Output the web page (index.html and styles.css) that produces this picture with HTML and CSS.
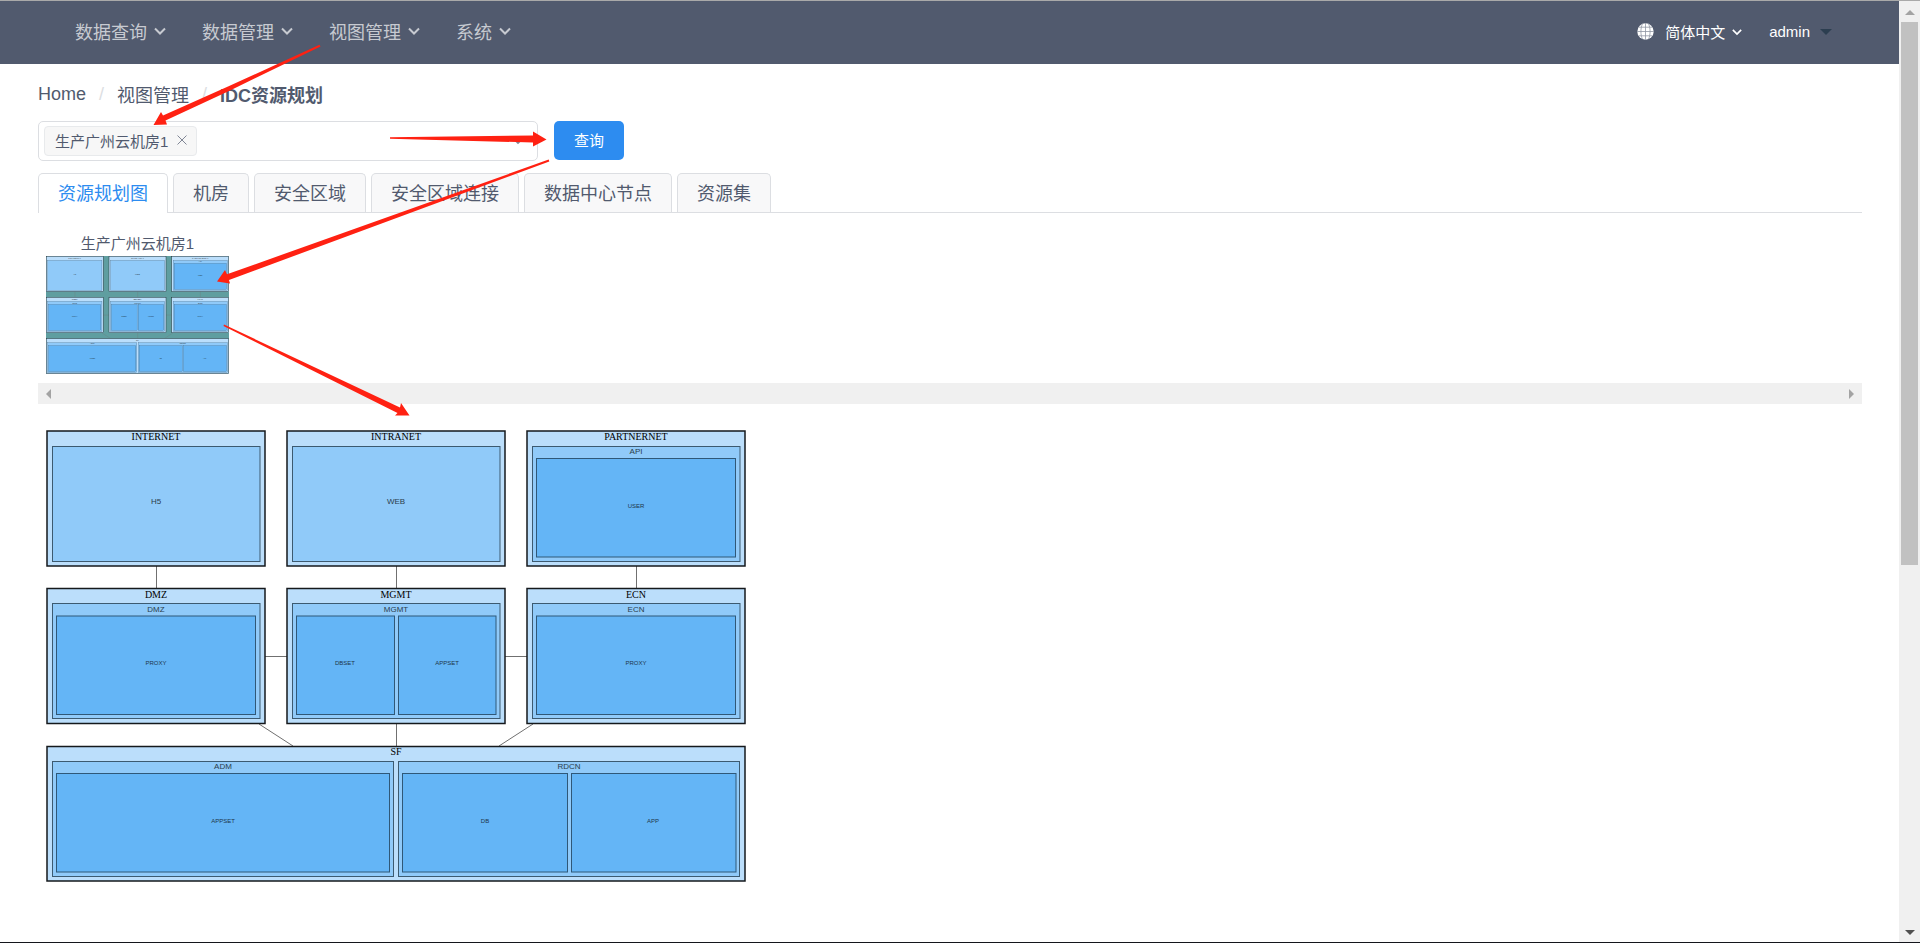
FILE: index.html
```html
<!DOCTYPE html>
<html lang="zh-CN">
<head>
<meta charset="utf-8">
<title>IDC资源规划</title>
<link rel="stylesheet" href="styles.css">
</head>
<body>
<div class="window">
  <div class="page">
    <header class="header">
      <nav class="menu">
        <button class="menu-item" type="button">数据查询<svg class="chevron" viewBox="0 0 12 8"><path d="M1 1.500 6 6.500l5-5"/></svg></button>
        <button class="menu-item" type="button">数据管理<svg class="chevron" viewBox="0 0 12 8"><path d="M1 1.500 6 6.500l5-5"/></svg></button>
        <button class="menu-item" type="button">视图管理<svg class="chevron" viewBox="0 0 12 8"><path d="M1 1.500 6 6.500l5-5"/></svg></button>
        <button class="menu-item" type="button">系统<svg class="chevron" viewBox="0 0 12 8"><path d="M1 1.500 6 6.500l5-5"/></svg></button>
      </nav>
      <div class="account">
        <button class="account-item" type="button">
          <svg class="globe" viewBox="0 0 17 17"><circle cx="8.500" cy="8.500" r="8.200" fill="#fff"/><path d="M8.500 0v17M0 8.500h17M2 4.200h13M2 12.800h13M5.500.8C3.400 5 3.400 12 5.500 16.200M11.500.8c2.100 4.200 2.100 11.200 0 15.400" fill="none" stroke="#8f95a3" stroke-width=".8"/></svg>
          <span>简体中文</span>
          <svg class="chevron chevron-small" viewBox="0 0 12 8"><path d="M1 1.500 6 6.500l5-5"/></svg>
        </button>
        <button class="account-item" type="button">
          <span>admin</span>
          <svg class="caret" viewBox="0 0 12 6"><path d="M0 0h12L6 6z"/></svg>
        </button>
      </div>
    </header>

    <main class="content">
      <nav class="breadcrumb" aria-label="breadcrumb">
        <a href="#">Home</a><span class="separator">/</span><a href="#">视图管理</a><span class="separator">/</span><strong>IDC资源规划</strong>
      </nav>

      <div class="search">
        <div class="picker">
          <span class="tag">生产广州云机房1<button class="tag-close" type="button" aria-label="remove"><svg viewBox="0 0 10 10"><path d="M.5.500l9 9M9.500.5l-9 9"/></svg></button></span>
          <svg class="picker-arrow" viewBox="0 0 12 8"><path d="M1.500 1.500 6 6l4.500-4.500"/></svg>
        </div>
        <button class="query" type="button">查询</button>
      </div>

      <div class="tabs" role="tablist">
        <button class="tab tab-active" type="button" role="tab" aria-selected="true">资源规划图</button>
        <button class="tab" type="button" role="tab">机房</button>
        <button class="tab" type="button" role="tab">安全区域</button>
        <button class="tab" type="button" role="tab">安全区域连接</button>
        <button class="tab" type="button" role="tab">数据中心节点</button>
        <button class="tab" type="button" role="tab">资源集</button>
      </div>

      <section class="thumbs">
        <figure class="thumb">
          <figcaption>生产广州云机房1</figcaption>
          <svg class="thumb-graph" viewBox="46 430 700 452" preserveAspectRatio="none"><use href="#plan"/></svg>
        </figure>
      </section>
      <div class="hscroll">
        <svg class="hscroll-arrow" viewBox="0 0 5 10"><path d="M5 0v10L0 5z"/></svg>
        <svg class="hscroll-arrow" viewBox="0 0 5 10"><path d="M0 0v10l5-5z"/></svg>
      </div>

      <svg class="graph" viewBox="46 430 700 452">
        <g id="plan">
          <g class="link">
            <path d="M156.500 566v22M396.500 566v22M636.500 566v22M265 656.500h22M505 656.500h22M396.500 724v22M259 724l34 22M533 724l-34 22"/>
          </g>
          <g class="zone">
            <rect x="47" y="431" width="218" height="135"/>
            <rect x="287" y="431" width="218" height="135"/>
            <rect x="527" y="431" width="218" height="135"/>
            <rect x="47" y="588.500" width="218" height="135"/>
            <rect x="287" y="588.500" width="218" height="135"/>
            <rect x="527" y="588.500" width="218" height="135"/>
            <rect x="47" y="746.500" width="698" height="134.500"/>
          </g>
          <g class="area">
            <rect x="52.500" y="446.500" width="207.500" height="115"/>
            <rect x="292.500" y="446.500" width="207.500" height="115"/>
            <rect x="532.500" y="446.500" width="207.500" height="115"/>
            <rect x="52.500" y="603.500" width="207.500" height="115"/>
            <rect x="292.500" y="603.500" width="207.500" height="115"/>
            <rect x="532.500" y="603.500" width="207.500" height="115"/>
            <rect x="52.500" y="761.500" width="341" height="115"/>
            <rect x="398.500" y="761.500" width="341" height="115"/>
          </g>
          <g class="set">
            <rect x="536.500" y="458.500" width="199" height="98.500"/>
            <rect x="56.500" y="616" width="199" height="98.500"/>
            <rect x="296.500" y="616" width="98" height="98.500"/>
            <rect x="398.500" y="616" width="97.500" height="98.500"/>
            <rect x="536.500" y="616" width="199" height="98.500"/>
            <rect x="56.500" y="773.500" width="333" height="98.500"/>
            <rect x="402.500" y="773.500" width="165" height="98.500"/>
            <rect x="571.500" y="773.500" width="164.500" height="98.500"/>
          </g>
          <g class="zone-name">
            <text x="156" y="440">INTERNET</text>
            <text x="396" y="440">INTRANET</text>
            <text x="636" y="440">PARTNERNET</text>
            <text x="156" y="598">DMZ</text>
            <text x="396" y="598">MGMT</text>
            <text x="636" y="598">ECN</text>
            <text x="396" y="755">SF</text>
          </g>
          <g class="area-name">
            <text x="156" y="504">H5</text>
            <text x="396" y="504">WEB</text>
            <text x="636" y="454">API</text>
            <text x="156" y="612">DMZ</text>
            <text x="396" y="612">MGMT</text>
            <text x="636" y="612">ECN</text>
            <text x="223" y="769">ADM</text>
            <text x="569" y="769">RDCN</text>
          </g>
          <g class="set-name">
            <text x="636" y="508">USER</text>
            <text x="156" y="665">PROXY</text>
            <text x="345" y="665">DBSET</text>
            <text x="447" y="665">APPSET</text>
            <text x="636" y="665">PROXY</text>
            <text x="223" y="823">APPSET</text>
            <text x="485" y="823">DB</text>
            <text x="653" y="823">APP</text>
          </g>
        </g>
      </svg>
    </main>
  </div>

  <div class="vscroll">
    <svg class="vscroll-arrow vscroll-up" viewBox="0 0 10 5"><path d="M0 5h10L5 0z"/></svg>
    <div class="vscroll-thumb"></div>
    <svg class="vscroll-arrow vscroll-down" viewBox="0 0 10 5"><path d="M0 0h10L5 5z"/></svg>
  </div>
</div>

<svg class="pointers" width="620" height="430" viewBox="0 0 620 430">
  <path d="M319.500 44.800 228 86.500 163 115.500 161 112 153.500 125 167 124.500 165.500 120.500 229 91 320.500 46.400z"/>
  <path d="M390 137.200 533 135.500 533 131.500 546.500 139.500 533 146.500 533 142.500 390 138.800z"/>
  <path d="M548.700 159.600 227 274.300 225 270 217 281.500 230 283.500 229 280 549.300 161.400z"/>
  <path d="M224 324.500 400 407.500 401 403 409.500 415.500 395 415.500 397.500 413 223.500 326z"/>
</svg>
</body>
</html>
```
FILE: styles.css
```css
* {
  box-sizing: border-box;
}

body {
  margin: 0;
  background: #fff;
  color: #515a6e;
  font-family: "Liberation Sans", "Noto Sans CJK SC", sans-serif;
  font-size: 15px;
}

button {
  padding: 0;
  border: 0;
  background: none;
  color: inherit;
  font: inherit;
  cursor: pointer;
}

svg {
  display: block;
}

.window {
  display: flex;
  min-height: 100vh;
  border-top: 1px solid #a9a9a9;
  border-bottom: 1px solid #14161c;
}

.page {
  flex: 1;
  min-width: 0;
}

.header {
  display: flex;
  align-items: center;
  justify-content: space-between;
  height: 63px;
  padding: 0 67px 2px 75px;
  background: #515a6e;
}

.menu {
  display: flex;
  gap: 36px;
}

.menu-item {
  display: flex;
  align-items: center;
  gap: 7px;
  padding-bottom: 1px;
  color: #c7cad1;
  font-size: 18px;
}

.chevron {
  width: 12px;
  height: 8px;
  fill: none;
  stroke: currentColor;
  stroke-width: 2;
}

.account {
  display: flex;
  gap: 27px;
  color: #fff;
}

.account-item {
  display: flex;
  align-items: center;
}

.globe {
  width: 17px;
  height: 17px;
  margin-right: 11px;
}

.chevron-small {
  width: 10px;
  margin-left: 7px;
}

.caret {
  width: 12px;
  height: 6px;
  margin-left: 10px;
  fill: #2c3e50;
}

.content {
  padding: 15px 37px 60px 38px;
}

.breadcrumb {
  display: flex;
  align-items: center;
  height: 30px;
  font-size: 18px;
}

.breadcrumb a {
  color: inherit;
  text-decoration: none;
}

.breadcrumb strong {
  font-weight: 700;
}

.separator {
  margin: 0 13px;
  color: #dcdee2;
}

.search {
  display: flex;
  align-items: flex-start;
  gap: 16px;
  margin-top: 12px;
}

.picker {
  display: flex;
  align-items: center;
  justify-content: space-between;
  width: 500px;
  height: 40px;
  padding: 0 14px 0 5px;
  border: 1px solid #dcdee2;
  border-radius: 5px;
}

.tag {
  display: flex;
  align-items: center;
  gap: 9px;
  height: 30px;
  padding: 0 9px 2px 10px;
  border: 1px solid #e8eaec;
  border-radius: 4px;
  background: #f7f7f7;
}

.tag-close {
  width: 10px;
  height: 10px;
}

.tag-close svg,
.picker-arrow {
  fill: none;
  stroke: #808695;
}

.picker-arrow {
  width: 10px;
  height: 7px;
  stroke-width: 2;
}

.query {
  width: 70px;
  height: 39px;
  padding-bottom: 2px;
  border-radius: 5px;
  background: #2d8cf0;
  color: #fff;
}

.tabs {
  display: flex;
  gap: 5px;
  margin-top: 12px;
  border-bottom: 1px solid #dcdee2;
}

.tab {
  height: 39px;
  padding: 0 19px 2px;
  border: 1px solid #dcdee2;
  border-bottom: 0;
  border-radius: 5px 5px 0 0;
  background: #f8f8f9;
  font-size: 18px;
}

.tab-active {
  height: 40px;
  margin-bottom: -1px;
  padding-bottom: 3px;
  background: #fff;
  color: #2d8cf0;
}

.thumbs {
  padding: 19px 8px 9px;
}

.thumb {
  width: 183px;
  margin: 0;
  text-align: center;
}

.thumb figcaption {
  height: 24px;
  line-height: 23px;
}

.thumb-graph {
  width: 183px;
  height: 118px;
  background: #5f9ea0;
}

.hscroll {
  display: flex;
  align-items: center;
  justify-content: space-between;
  height: 21px;
  padding: 0 8px;
  background: #f0f0f0;
}

.hscroll-arrow {
  width: 5px;
  height: 10px;
  fill: #a3a3a3;
}

.graph {
  width: 700px;
  height: 452px;
  margin: 26px 0 0 8px;
}

.link {
  fill: none;
  stroke: #707070;
}

.zone {
  fill: #bbdefb;
  stroke: #15191c;
  stroke-width: 1.5;
}

.area {
  fill: #90caf9;
  stroke: #3c5a70;
}

.set {
  fill: #64b5f6;
  stroke: #2f5878;
}

.zone-name,
.area-name,
.set-name {
  text-anchor: middle;
}

.zone-name {
  fill: #000;
  font: 10px "Liberation Serif", serif;
}

.area-name {
  fill: #2b3d4b;
  font: 8px "Liberation Sans", sans-serif;
}

.set-name {
  fill: #1e364a;
  font: 6px "Liberation Sans", sans-serif;
}

.vscroll {
  display: flex;
  flex-direction: column;
  align-items: center;
  width: 21px;
  background: #f0f0f0;
}

.vscroll-arrow {
  width: 10px;
  height: 5px;
}

.vscroll-up {
  margin: 9px 0 7px;
  fill: #a3a3a3;
}

.vscroll-thumb {
  flex: 0 0 calc(58% - 3px);
  width: 17px;
  background: #c1c1c1;
}

.vscroll-down {
  margin: auto 0 7px;
  fill: #505050;
}

.pointers {
  position: absolute;
  top: 0;
  left: 0;
  fill: #ff2112;
  pointer-events: none;
}
```
